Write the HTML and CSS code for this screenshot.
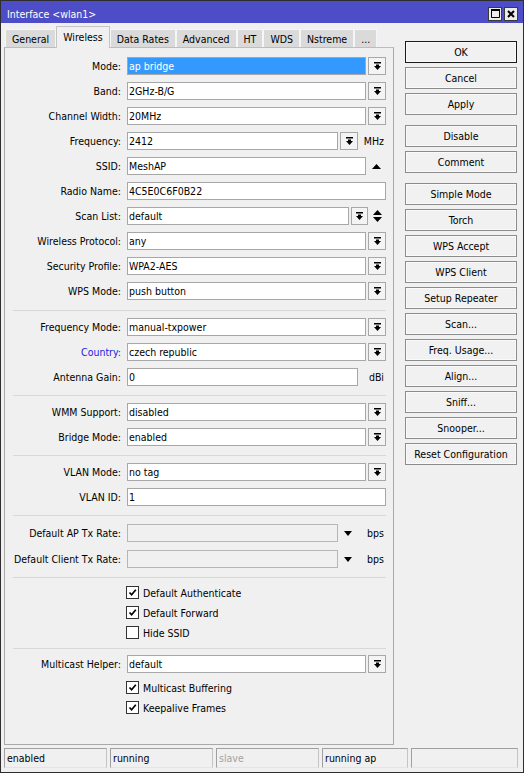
FILE: index.html
```html
<!DOCTYPE html>
<html>
<head>
<meta charset="utf-8">
<title>Interface &lt;wlan1&gt;</title>
<link rel="stylesheet" href="styles.css">
</head>
<body>
<div class="window">
  <div class="titlebar">
    <span class="title">Interface &lt;wlan1&gt;</span>
    <div class="tb-btns">
      <span class="tb-btn"><svg width="9" height="9" viewBox="0 0 9 9"><path d="M0.5 0.5h8v8h-8z" fill="none" stroke="#000" stroke-width="1"/><path d="M0 0h9v2H0z" fill="#000"/></svg></span>
      <span class="tb-btn"><svg width="8" height="8" viewBox="0 0 8 8"><path d="M1 1L7 7M7 1L1 7" stroke="#000" stroke-width="2"/></svg></span>
    </div>
  </div>
  <div class="main">
    <div class="left">
      <div class="tabs">
        <span class="tab">General</span>
        <span class="tab active">Wireless</span>
        <span class="tab">Data Rates</span>
        <span class="tab">Advanced</span>
        <span class="tab">HT</span>
        <span class="tab">WDS</span>
        <span class="tab">Nstreme</span>
        <span class="tab">...</span>
      </div>
      <div class="panel">
        <div class="group">
          <div class="row"><span class="lbl">Mode:</span><div class="field"><div class="input sel">ap bridge</div><span class="dd"><svg width="7" height="8" viewBox="0 0 7 8"><path d="M0 0h7v1.5H0zM2 2.5h3V4h2L3.5 8 0 4h2z" fill="#000"/></svg></span></div></div>
          <div class="row"><span class="lbl">Band:</span><div class="field"><div class="input">2GHz-B/G</div><span class="dd"><svg width="7" height="8" viewBox="0 0 7 8"><path d="M0 0h7v1.5H0zM2 2.5h3V4h2L3.5 8 0 4h2z" fill="#000"/></svg></span></div></div>
          <div class="row"><span class="lbl">Channel Width:</span><div class="field"><div class="input">20MHz</div><span class="dd"><svg width="7" height="8" viewBox="0 0 7 8"><path d="M0 0h7v1.5H0zM2 2.5h3V4h2L3.5 8 0 4h2z" fill="#000"/></svg></span></div></div>
          <div class="row"><span class="lbl">Frequency:</span><div class="field"><div class="input">2412</div><span class="dd"><svg width="7" height="8" viewBox="0 0 7 8"><path d="M0 0h7v1.5H0zM2 2.5h3V4h2L3.5 8 0 4h2z" fill="#000"/></svg></span><span class="unit">MHz</span></div></div>
          <div class="row"><span class="lbl">SSID:</span><div class="field"><div class="input">MeshAP</div><span class="slot"><svg width="9" height="5" viewBox="0 0 9 5"><path d="M0 5L4.5 0 9 5z" fill="#000"/></svg></span></div></div>
          <div class="row"><span class="lbl">Radio Name:</span><div class="field"><div class="input">4C5E0C6F0B22</div></div></div>
          <div class="row"><span class="lbl">Scan List:</span><div class="field"><div class="input">default</div><span class="dd dd-s"><svg width="7" height="8" viewBox="0 0 7 8"><path d="M0 0h7v1.5H0zM2 2.5h3V4h2L3.5 8 0 4h2z" fill="#000"/></svg></span><span class="slot slot-s"><svg width="9" height="12" viewBox="0 0 9 12"><path d="M0 5L4.5 0 9 5zM0 7h9L4.5 12z" fill="#000"/></svg></span></div></div>
          <div class="row"><span class="lbl">Wireless Protocol:</span><div class="field"><div class="input">any</div><span class="dd"><svg width="7" height="8" viewBox="0 0 7 8"><path d="M0 0h7v1.5H0zM2 2.5h3V4h2L3.5 8 0 4h2z" fill="#000"/></svg></span></div></div>
          <div class="row"><span class="lbl">Security Profile:</span><div class="field"><div class="input">WPA2-AES</div><span class="dd"><svg width="7" height="8" viewBox="0 0 7 8"><path d="M0 0h7v1.5H0zM2 2.5h3V4h2L3.5 8 0 4h2z" fill="#000"/></svg></span></div></div>
          <div class="row"><span class="lbl">WPS Mode:</span><div class="field"><div class="input">push button</div><span class="dd"><svg width="7" height="8" viewBox="0 0 7 8"><path d="M0 0h7v1.5H0zM2 2.5h3V4h2L3.5 8 0 4h2z" fill="#000"/></svg></span></div></div>
        </div>
        <div class="sep sep-first"></div>
        <div class="group">
          <div class="row"><span class="lbl">Frequency Mode:</span><div class="field"><div class="input">manual-txpower</div><span class="dd"><svg width="7" height="8" viewBox="0 0 7 8"><path d="M0 0h7v1.5H0zM2 2.5h3V4h2L3.5 8 0 4h2z" fill="#000"/></svg></span></div></div>
          <div class="row"><span class="lbl link">Country:</span><div class="field"><div class="input">czech republic</div><span class="dd"><svg width="7" height="8" viewBox="0 0 7 8"><path d="M0 0h7v1.5H0zM2 2.5h3V4h2L3.5 8 0 4h2z" fill="#000"/></svg></span></div></div>
          <div class="row"><span class="lbl">Antenna Gain:</span><div class="field"><div class="input">0</div><span class="unit">dBi</span></div></div>
        </div>
        <div class="sep"></div>
        <div class="group">
          <div class="row"><span class="lbl">WMM Support:</span><div class="field"><div class="input">disabled</div><span class="dd"><svg width="7" height="8" viewBox="0 0 7 8"><path d="M0 0h7v1.5H0zM2 2.5h3V4h2L3.5 8 0 4h2z" fill="#000"/></svg></span></div></div>
          <div class="row"><span class="lbl">Bridge Mode:</span><div class="field"><div class="input">enabled</div><span class="dd"><svg width="7" height="8" viewBox="0 0 7 8"><path d="M0 0h7v1.5H0zM2 2.5h3V4h2L3.5 8 0 4h2z" fill="#000"/></svg></span></div></div>
        </div>
        <div class="sep"></div>
        <div class="group">
          <div class="row"><span class="lbl">VLAN Mode:</span><div class="field"><div class="input">no tag</div><span class="dd"><svg width="7" height="8" viewBox="0 0 7 8"><path d="M0 0h7v1.5H0zM2 2.5h3V4h2L3.5 8 0 4h2z" fill="#000"/></svg></span></div></div>
          <div class="row"><span class="lbl">VLAN ID:</span><div class="field"><div class="input">1</div></div></div>
        </div>
        <div class="sep sep-mb8"></div>
        <div class="group group-wide">
          <div class="row"><span class="lbl">Default AP Tx Rate:</span><div class="field"><div class="input off"></div><span class="slot"><svg width="8" height="5" viewBox="0 0 8 5"><path d="M0 0h8L4 5z" fill="#000"/></svg></span><span class="unit">bps</span></div></div>
          <div class="row"><span class="lbl">Default Client Tx Rate:</span><div class="field"><div class="input off"></div><span class="slot"><svg width="8" height="5" viewBox="0 0 8 5"><path d="M0 0h8L4 5z" fill="#000"/></svg></span><span class="unit">bps</span></div></div>
        </div>
        <div class="sep sep-mb6"></div>
        <div class="checks">
          <div class="check"><span class="cb"><svg width="9" height="9" viewBox="0 0 9 9"><path d="M1.5 4.5L3.6 6.8 7.8 1.8" fill="none" stroke="#000" stroke-width="1.7"/></svg></span><span>Default Authenticate</span></div>
          <div class="check"><span class="cb"><svg width="9" height="9" viewBox="0 0 9 9"><path d="M1.5 4.5L3.6 6.8 7.8 1.8" fill="none" stroke="#000" stroke-width="1.7"/></svg></span><span>Default Forward</span></div>
          <div class="check"><span class="cb"></span><span>Hide SSID</span></div>
        </div>
        <div class="sep sep-checks"></div>
        <div class="group">
          <div class="row"><span class="lbl">Multicast Helper:</span><div class="field"><div class="input">default</div><span class="dd"><svg width="7" height="8" viewBox="0 0 7 8"><path d="M0 0h7v1.5H0zM2 2.5h3V4h2L3.5 8 0 4h2z" fill="#000"/></svg></span></div></div>
        </div>
        <div class="checks checks-after">
          <div class="check"><span class="cb"><svg width="9" height="9" viewBox="0 0 9 9"><path d="M1.5 4.5L3.6 6.8 7.8 1.8" fill="none" stroke="#000" stroke-width="1.7"/></svg></span><span>Multicast Buffering</span></div>
          <div class="check"><span class="cb"><svg width="9" height="9" viewBox="0 0 9 9"><path d="M1.5 4.5L3.6 6.8 7.8 1.8" fill="none" stroke="#000" stroke-width="1.7"/></svg></span><span>Keepalive Frames</span></div>
        </div>
      </div>
    </div>
    <div class="right">
      <div class="btns">
        <span class="btn btn-default">OK</span>
        <span class="btn">Cancel</span>
        <span class="btn">Apply</span>
      </div>
      <div class="btns">
        <span class="btn">Disable</span>
        <span class="btn">Comment</span>
      </div>
      <div class="btns">
        <span class="btn">Simple Mode</span>
        <span class="btn">Torch</span>
        <span class="btn">WPS Accept</span>
        <span class="btn">WPS Client</span>
        <span class="btn">Setup Repeater</span>
        <span class="btn">Scan...</span>
        <span class="btn">Freq. Usage...</span>
        <span class="btn">Align...</span>
        <span class="btn">Sniff...</span>
        <span class="btn">Snooper...</span>
        <span class="btn">Reset Configuration</span>
      </div>
    </div>
  </div>
  <div class="status">
    <span class="cell">enabled</span>
    <span class="cell">running</span>
    <span class="cell dim">slave</span>
    <span class="cell">running ap</span>
    <span class="cell"></span>
  </div>
</div>
</body>
</html>
```

FILE: styles.css
```css
* { box-sizing: border-box; }
html, body { margin: 0; padding: 0; }
body {
  width: 524px;
  height: 773px;
  font-family: "DejaVu Sans Condensed", "DejaVu Sans", sans-serif;
  font-stretch: condensed;
  font-size: 10.5px;
  color: #000;
  background: #f0f0f0;
}
.window {
  width: 524px;
  height: 773px;
  border: 1px solid #2e2e2e;
  background: #f0f0f0;
  display: flex;
  flex-direction: column;
}
.titlebar {
  height: 22px;
  flex-shrink: 0;
  background: #4d4dc7;
  color: #fff;
  display: flex;
  align-items: center;
  padding: 3px 5px 0 6px;
}
.title { white-space: nowrap; }
.tb-btns { margin-left: auto; display: flex; gap: 2px; }
.tb-btn {
  width: 14px;
  height: 14px;
  border: 1px solid #3a3a3a;
  background: #ececec;
  display: flex;
  align-items: center;
  justify-content: center;
}
.main { flex: 1; display: flex; min-height: 0; }
.left {
  width: 390px;
  margin-left: 3px;
  display: flex;
  flex-direction: column;
}
.tabs {
  height: 24px;
  flex-shrink: 0;
  display: flex;
  align-items: flex-end;
  padding-left: 1px;
}
.tab {
  height: 18px;
  padding: 0 6px;
  background: #dadada;
  border: 1px solid #f6f6f6;
  border-bottom: none;
  display: flex;
  align-items: center;
  white-space: nowrap;
}
.tab.active {
  height: 22px;
  margin-bottom: -1px;
  padding-bottom: 2px;
  background: #f0f0f0;
  border-color: #c4c4c4;
  position: relative;
  z-index: 1;
}
.panel {
  flex: 1;
  border: 1px solid #a9a9a9;
  border-top-color: #bdbdbd;
  padding-top: 9px;
  display: flex;
  flex-direction: column;
}
.group { display: flex; flex-direction: column; gap: 7px; }
.group-wide { gap: 8px; }
.row {
  display: grid;
  grid-template-columns: 116px 259px;
  column-gap: 6px;
  height: 18px;
  align-items: center;
}
.lbl { text-align: right; white-space: nowrap; }
.lbl.link { color: #1c1ce0; }
.field { display: flex; height: 18px; }
.input {
  flex: 1;
  min-width: 0;
  border: 1px solid #a7a7a7;
  background: #fff;
  padding: 0 1px;
  line-height: 16px;
  white-space: nowrap;
  overflow: hidden;
}
.input.sel { background: #3399ff; color: #fff; }
.input.off { background: #f0f0f0; border-color: #b6b6b6; }
.dd {
  width: 18px;
  flex-shrink: 0;
  margin-left: 2px;
  border: 1px solid #a8a8a8;
  background: #f4f4f4;
  display: flex;
  align-items: center;
  justify-content: center;
}
.dd-s { width: 17px; }
.slot {
  width: 20px;
  flex-shrink: 0;
  display: flex;
  align-items: center;
  justify-content: center;
}
.slot-s { width: 18px; }
.unit {
  width: 28px;
  flex-shrink: 0;
  text-align: right;
  padding-right: 2px;
  line-height: 18px;
}
.sep {
  height: 1px;
  flex-shrink: 0;
  background: #d8d8d8;
  margin: 9px 7px 7px 8px;
}
.sep-first { margin-top: 10px; }
.sep-mb8 { margin-bottom: 8px; }
.sep-mb6 { margin-bottom: 6px; }
.sep-checks { margin-top: 7px; margin-bottom: 6px; }
.checks {
  display: flex;
  flex-direction: column;
  gap: 3px;
  padding-left: 121px;
}
.checks-after { margin-top: 6px; }
.check {
  height: 17px;
  display: flex;
  align-items: center;
  gap: 4px;
  white-space: nowrap;
}
.cb {
  width: 13px;
  height: 13px;
  border: 1px solid #333;
  background: #fff;
  display: flex;
  align-items: center;
  justify-content: center;
}
.right {
  width: 112px;
  margin-left: 11px;
  padding-top: 18px;
}
.btns { display: flex; flex-direction: column; gap: 4px; }
.btns + .btns { margin-top: 10px; }
.btn {
  height: 22px;
  border: 1px solid #8c8c8c;
  background: #f1f1f1;
  box-shadow: inset 0 0 0 1px #fafafa;
  display: flex;
  align-items: center;
  justify-content: center;
  white-space: nowrap;
}
.btn-default { border-color: #1a1a1a; }
.status {
  height: 27px;
  flex-shrink: 0;
  display: grid;
  grid-template-columns: 103px 103px 103px 86px 107px;
  column-gap: 3px;
  padding: 3px 0 4px 3px;
}
.cell {
  border: 1px solid #a0a0a0;
  border-right-color: #c4c4c4;
  border-bottom-color: #e4e4e4;
  padding-left: 2px;
  line-height: 18px;
  white-space: nowrap;
}
.cell.dim { color: #a3a3a3; }
```
